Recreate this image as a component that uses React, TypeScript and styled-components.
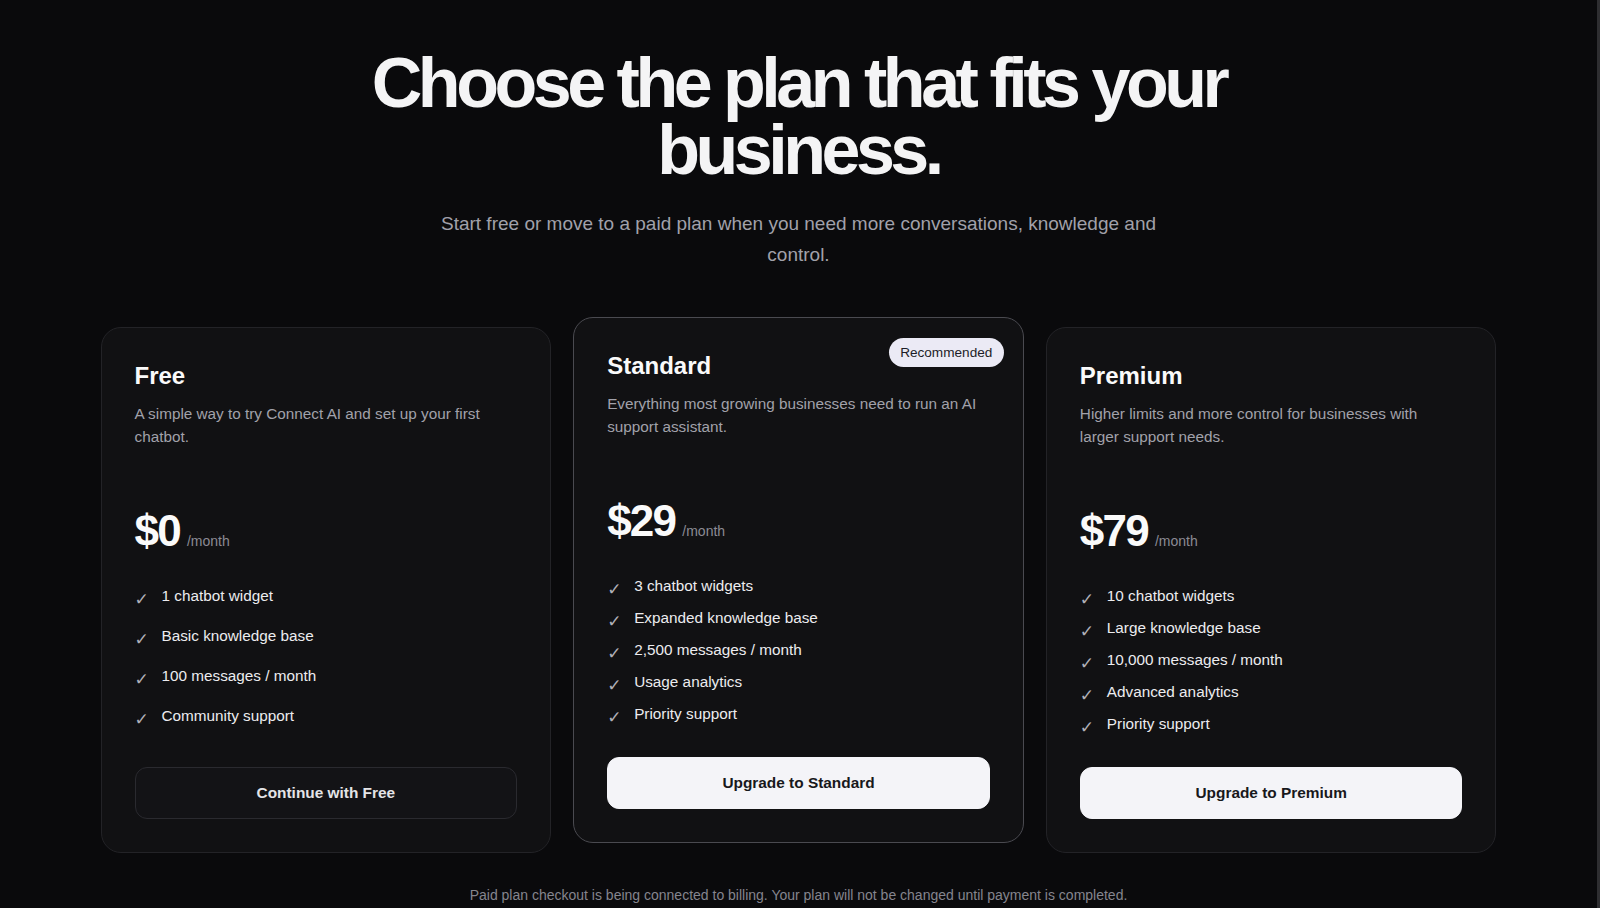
import styled, { createGlobalStyle } from 'styled-components';

type Plan = {
  name: string;
  description: string;
  price: string;
  features: string[];
  cta: string;
  featured?: boolean;
  solid?: boolean;
};

const PLANS: Plan[] = [
  {
    name: 'Free',
    description: 'A simple way to try Connect AI and set up your first chatbot.',
    price: '$0',
    features: ['1 chatbot widget', 'Basic knowledge base', '100 messages / month', 'Community support'],
    cta: 'Continue with Free',
  },
  {
    name: 'Standard',
    description: 'Everything most growing businesses need to run an AI support assistant.',
    price: '$29',
    features: [
      '3 chatbot widgets',
      'Expanded knowledge base',
      '2,500 messages / month',
      'Usage analytics',
      'Priority support',
    ],
    cta: 'Upgrade to Standard',
    featured: true,
    solid: true,
  },
  {
    name: 'Premium',
    description: 'Higher limits and more control for businesses with larger support needs.',
    price: '$79',
    features: [
      '10 chatbot widgets',
      'Large knowledge base',
      '10,000 messages / month',
      'Advanced analytics',
      'Priority support',
    ],
    cta: 'Upgrade to Premium',
    solid: true,
  },
];

const GlobalStyle = createGlobalStyle`
  html, body {
    margin: 0;
    overflow: hidden;
    background: #0a0a0c;
  }
  * {
    box-sizing: border-box;
  }
  body {
    font-family: "Liberation Sans", Arial, sans-serif;
  }
`;

const Page = styled.main`
  min-height: 100vh;
  padding-top: 50px;
  border-right: 3px solid #2e2e31;
  color: #f4f4f5;
`;

const Title = styled.h1`
  max-width: 900px;
  margin: 0 auto;
  font-size: 70px;
  line-height: 67px;
  font-weight: 700;
  letter-spacing: -0.064em;
  text-align: center;
  color: #f4f4f5;
`;

const Subtitle = styled.p`
  max-width: 740px;
  margin: 24px auto 0;
  font-size: 19px;
  line-height: 31px;
  text-align: center;
  color: #a1a1aa;
`;

const Grid = styled.section`
  display: grid;
  grid-template-columns: repeat(3, 1fr);
  gap: 22px;
  max-width: 1396px;
  margin: 57px auto 0;
`;

const Card = styled.article<{ $featured?: boolean }>`
  position: relative;
  display: flex;
  flex-direction: column;
  padding: 34px 33px 33px;
  background: #111113;
  border: 1px solid ${p => (p.$featured ? '#4a4a50' : '#232327')};
  border-radius: 20px;
  transform: ${p => (p.$featured ? 'translateY(-10px)' : 'none')};
`;

const Badge = styled.span`
  position: absolute;
  top: 20px;
  right: 19px;
  display: flex;
  align-items: center;
  height: 29px;
  padding: 0 11.5px;
  border-radius: 999px;
  background: #ebeaf5;
  color: #1d1d28;
  font-size: 13.6px;
  font-weight: 400;
`;

const PlanName = styled.h2`
  margin: 0;
  font-size: 24px;
  line-height: 28.8px;
  font-weight: 700;
  color: #fafafa;
`;

const Description = styled.p`
  max-width: 375px;
  margin: 12px 0 0;
  font-size: 15.3px;
  line-height: 22.8px;
  color: #a1a1aa;
`;

const PriceRow = styled.div`
  display: flex;
  align-items: baseline;
  gap: 7px;
  margin-top: 61px;
`;

const Price = styled.span`
  font-size: 44px;
  line-height: 1;
  font-weight: 700;
  letter-spacing: -0.04em;
  color: #fafafa;
`;

const Period = styled.span`
  font-size: 14px;
  color: #8b8b94;
`;

const Features = styled.ul`
  flex: 1;
  display: grid;
  gap: 12px;
  margin: 33px 0 0;
  padding: 0;
  list-style: none;
`;

const Feature = styled.li`
  display: flex;
  align-items: flex-start;
  height: 20px;
  font-size: 15.3px;
  line-height: 20px;
  color: #ececef;
`;

const Check = styled.span`
  flex: none;
  width: 12px;
  margin-right: 15px;
  font-family: "DejaVu Sans", sans-serif;
  font-size: 17px;
  font-weight: 700;
  line-height: 20px;
  color: #b0b0b8;
  transform: translateY(3px);
`;

const PlanButton = styled.button<{ $solid?: boolean }>`
  width: 100%;
  height: 52px;
  margin-top: 33px;
  border-radius: 12px;
  border: 1px solid ${p => (p.$solid ? '#f4f4f8' : '#2a2a2f')};
  background: ${p => (p.$solid ? '#f4f4f8' : '#131316')};
  color: ${p => (p.$solid ? '#18181b' : '#e4e4e7')};
  font-family: "Liberation Sans", Arial, sans-serif;
  font-size: 15.4px;
  font-weight: 700;
  cursor: pointer;
`;

const Footnote = styled.p`
  margin: 32px 0 0;
  font-size: 14px;
  line-height: 20px;
  text-align: center;
  color: #85858e;
`;

function PlanCard({ plan }: { plan: Plan }) {
  return (
    <Card $featured={plan.featured}>
      {plan.featured && <Badge>Recommended</Badge>}
      <PlanName>{plan.name}</PlanName>
      <Description>{plan.description}</Description>
      <PriceRow>
        <Price>{plan.price}</Price>
        <Period>/month</Period>
      </PriceRow>
      <Features>
        {plan.features.map(f => (
          <Feature key={f}>
            <Check>✓</Check>
            {f}
          </Feature>
        ))}
      </Features>
      <PlanButton $solid={plan.solid}>{plan.cta}</PlanButton>
    </Card>
  );
}

function App() {
  return (
    <>
      <GlobalStyle />
      <Page>
        <Title>Choose the plan that fits your business.</Title>
        <Subtitle>
          Start free or move to a paid plan when you need more conversations, knowledge and control.
        </Subtitle>
        <Grid>
          {PLANS.map(p => (
            <PlanCard key={p.name} plan={p} />
          ))}
        </Grid>
        <Footnote>
          Paid plan checkout is being connected to billing. Your plan will not be changed until payment is completed.
        </Footnote>
      </Page>
    </>
  );
}

export default App;
